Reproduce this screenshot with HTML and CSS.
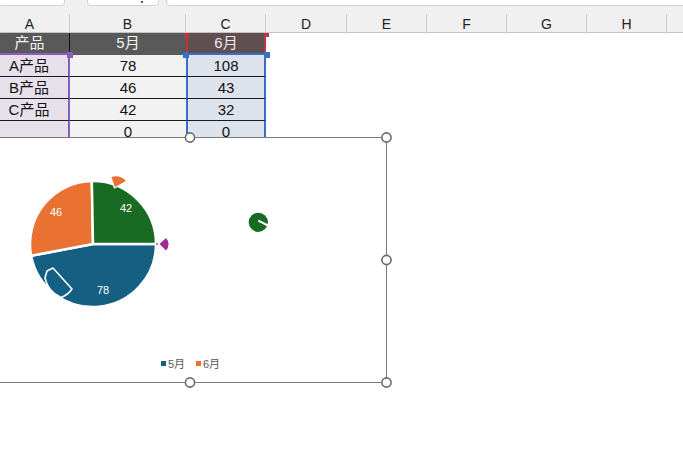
FILE: index.html
```html
<!DOCTYPE html>
<html>
<head>
<meta charset="utf-8">
<link rel="stylesheet" href="styles.css">
</head>
<body>
<div class="page">
  <div class="topbar">
    <div class="box b1"></div>
    <div class="box b2"><span class="caret"></span></div>
    <div class="box b3"></div>
  </div>
  <div class="sheet">
    <div class="colhead">
      <div class="ch">A</div><div class="ch">B</div><div class="ch">C</div><div class="ch">D</div>
      <div class="ch">E</div><div class="ch">F</div><div class="ch">G</div><div class="ch">H</div><div class="ch last"></div>
    </div>
    <div class="grid">
      <div class="cell a hd">产品</div><div class="cell b hd">5月</div><div class="cell c hd">6月</div>
      <div class="cell a">A产品</div><div class="cell b">78</div><div class="cell c">108</div>
      <div class="cell a">B产品</div><div class="cell b">46</div><div class="cell c">43</div>
      <div class="cell a">C产品</div><div class="cell b">42</div><div class="cell c">32</div>
      <div class="cell a"></div><div class="cell b">0</div><div class="cell c">0</div>
    </div>
  </div>
  <span class="hnd purple h1"></span>
  <span class="hnd blue h2"></span>
  <span class="hnd blue h3"></span>
  <span class="hnd red h4"></span>
  <span class="hnd red h5"></span>
  <svg class="chart" width="683" height="466" viewBox="0 0 683 466">
    <rect x="-20" y="137.5" width="406.5" height="245" fill="#fff" stroke="#7a7a7a" stroke-width="1"/>
    <g stroke="#fff" stroke-width="2.5" stroke-linejoin="round">
      <path d="M93,244 L156,244 A63,63 0 0 1 31.12,255.85 Z" fill="#156082"/>
      <path d="M93,244 L31.12,255.85 A63,63 0 0 1 91.81,181.01 Z" fill="#e97132"/>
      <path d="M93,244 L91.81,181.01 A63,63 0 0 1 156,244 Z" fill="#196b24"/>
    </g>
    <path d="M114.5,188 L110.5,176.5 A16 16 0 0 1 127,181 Z" fill="#e97132" stroke="#fff" stroke-width="1.4" stroke-linejoin="round"/>
    <path d="M159.5,244 L166,238 A9 9 0 0 1 166,250.5 Z" fill="#a02b93"/>
    <circle cx="157" cy="244" r="0.9" fill="#a02b93"/>
    <path d="M47,271 L53,268 L72,289 A22 22 0 0 1 61,297.5 Q48,292 45,278 Z" fill="#156082" stroke="#fff" stroke-width="1.6" stroke-linejoin="round"/>
    <circle cx="258.3" cy="222.3" r="9.6" fill="#196b24"/>
    <line x1="258.3" y1="220.6" x2="268" y2="225.5" stroke="#fff" stroke-width="2"/>
    <g class="lbl" fill="#fff" font-size="11" text-anchor="middle">
      <text x="126" y="212">42</text>
      <text x="56" y="216">46</text>
      <text x="103" y="294">78</text>
    </g>
    <rect x="161" y="361" width="5" height="5" fill="#156082"/>
    <text class="leg" x="168" y="367.5">5月</text>
    <rect x="196" y="361" width="5" height="5" fill="#e97132"/>
    <text class="leg" x="203" y="367.5">6月</text>
    <g fill="#fff" stroke="#6b6b6b" stroke-width="1.6">
      <circle cx="190" cy="137.5" r="4.6"/>
      <circle cx="386.5" cy="137.5" r="4.6"/>
      <circle cx="386.5" cy="260" r="4.6"/>
      <circle cx="190" cy="382.5" r="4.6"/>
      <circle cx="386.5" cy="382.5" r="4.6"/>
    </g>
  </svg>
</div>
</body>
</html>
```
FILE: styles.css
```css
html, body {
  margin: 0;
  padding: 0;
  background: #fff;
}
.page {
  position: relative;
  width: 683px;
  height: 466px;
  overflow: hidden;
  font-family: "Liberation Sans", "Noto Sans CJK SC", sans-serif;
}
.topbar {
  height: 7px;
  background: #f0f0f0;
  display: flex;
  align-items: flex-end;
  overflow: hidden;
}
.box {
  height: 12px;
  box-sizing: border-box;
  background: #fff;
  border: 1px solid #d2d2d2;
  border-radius: 4px;
  margin-bottom: 1px;
  position: relative;
}
.b1 { width: 67px; margin-left: -2px; }
.b2 { width: 72px; margin-left: 22px; }
.b3 { flex: 1; margin-left: 7px; margin-right: -6px; }
.caret {
  position: absolute;
  right: 15px;
  bottom: 2px;
  width: 2px;
  height: 2px;
  background: #555;
}
.sheet {
  margin-left: -10px;
}
.colhead {
  display: grid;
  grid-template-columns: 80px 116px 80px 81px 80px 80px 80px 80px 1fr;
  height: 26px;
  box-sizing: border-box;
  padding-top: 7px;
  background: #f0f0f0;
  border-bottom: 1px solid #c4c4c4;
}
.ch {
  border-right: 1px solid #cdcdcd;
  font-size: 14px;
  color: #222;
  text-align: center;
  line-height: 20px;
}
.ch.last { border-right: none; }
.grid {
  display: grid;
  grid-template-columns: 80px 116px 80px;
  grid-auto-rows: 22px;
}
.cell {
  box-sizing: border-box;
  font-size: 15px;
  color: #111;
  text-align: center;
  line-height: 21px;
  border-bottom: 1px solid #1a1a1a;
  overflow: hidden;
}
.cell.a {
  background: #e5e0ea;
  border-right: 2px solid #8a5dbd;
}
.cell.b { background: #f2f2f2; }
.cell.c {
  background: #dde3ec;
  border-left: 2px solid #3a6fc8;
  border-right: 2px solid #3a6fc8;
}
.cell.hd {
  color: #f4f4f4;
  background: #595959;
  line-height: 20px;
}
.cell.a.hd {
  border-right: 1px solid #111;
  border-bottom: 2px solid #8a5dbd;
}
.cell.b.hd { border-bottom: 1px solid #5a5a5a; }
.cell.c.hd {
  background: #604f4f;
  color: #efe6e6;
  border-left: 2px solid #c4313f;
  border-right: 2px solid #c4313f;
  border-bottom: 2px solid #3a6fc8;
}
.hnd {
  position: absolute;
  width: 6px;
  height: 6px;
  box-sizing: border-box;
}
.purple { background: #8a5dbd; }
.blue { background: #3a6fc8; }
.red { background: #c4313f; width: 5px; height: 4px; }
.h1 { left: 67px; top: 52px; }
.h2 { left: 183px; top: 52px; }
.h3 { left: 264px; top: 52px; }
.h4 { left: 184px; top: 33px; }
.h5 { left: 264px; top: 33px; }
.chart {
  position: absolute;
  left: 0;
  top: 0;
}
.lbl text {
  font-family: "Liberation Sans", sans-serif;
}
.leg {
  font-family: "Liberation Sans", "Noto Sans CJK SC", sans-serif;
  font-size: 11px;
  fill: #595959;
}
```
